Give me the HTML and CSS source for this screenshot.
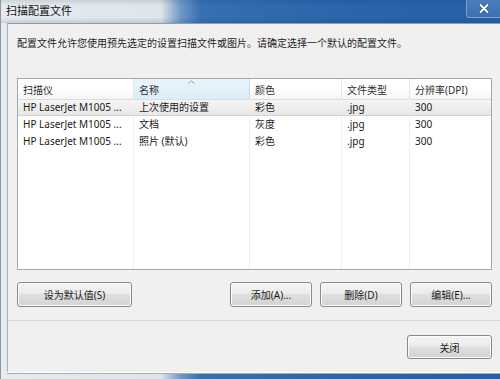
FILE: index.html
```html
<!DOCTYPE html>
<html>
<head>
    <title>扫描配置文件</title>
    <link rel="stylesheet" href="styles.css">
</head>
<body>
    <div class="window">
        <div class="titlebar">
            <span class="title">扫描配置文件</span>
            <div class="close">
                <svg width="10" height="9" viewBox="0 0 10 9">
                    <path d="M1.5 1 L8.5 8 M8.5 1 L1.5 8" stroke="#2b4e7d" stroke-width="3.2" stroke-linecap="round"/>
                    <path d="M1.5 1 L8.5 8 M8.5 1 L1.5 8" stroke="#fff" stroke-width="1.9" stroke-linecap="round"/>
                </svg>
            </div>
        </div>
        <div class="client">
            <div class="main">
                <p class="intro">配置文件允许您使用预先选定的设置扫描文件或图片。请确定选择一个默认的配置文件。</p>
                <div class="list">
                    <table>
                        <colgroup>
                            <col class="c1"><col class="c2"><col class="c3"><col class="c4"><col class="c5">
                        </colgroup>
                        <thead>
                            <tr>
                                <th>扫描仪</th>
                                <th class="sorted">名称
                                    <svg class="sort-arrow" width="7" height="4" viewBox="0 0 7 4">
                                        <path d="M0.5 3.5 L3.5 0.7 L6.5 3.5" fill="none" stroke="#8e9cab" stroke-width="1"/>
                                    </svg>
                                </th>
                                <th>颜色</th>
                                <th>文件类型</th>
                                <th>分辨率(DPI)</th>
                            </tr>
                        </thead>
                        <tbody>
                            <tr class="hot">
                                <td>HP LaserJet M1005 ...</td><td>上次使用的设置</td><td>彩色</td><td>.jpg</td><td>300</td>
                            </tr>
                            <tr>
                                <td>HP LaserJet M1005 ...</td><td>文档</td><td>灰度</td><td>.jpg</td><td>300</td>
                            </tr>
                            <tr>
                                <td>HP LaserJet M1005 ...</td><td>照片 (默认)</td><td>彩色</td><td>.jpg</td><td>300</td>
                            </tr>
                            <tr class="filler">
                                <td></td><td></td><td></td><td></td><td></td>
                            </tr>
                        </tbody>
                    </table>
                </div>
                <div class="actions">
                    <button class="btn btn-default">设为默认值(S)</button>
                    <button class="btn">添加(A)...</button>
                    <button class="btn">删除(D)</button>
                    <button class="btn">编辑(E)...</button>
                </div>
            </div>
            <div class="footer">
                <button class="btn btn-close">关闭</button>
            </div>
        </div>
    </div>
</body>
</html>
```

FILE: styles.css
```css
body {
    margin: 0;
    background: #fff;
    font-family: "Noto Sans", "Noto Sans CJK SC", sans-serif;
    font-size: 10px;
    color: #1a1a1a;
}

.window {
    width: 500px;
    height: 379px;
    box-sizing: border-box;
    border-left: 1px solid #8d97a3;
    background: linear-gradient(to right, #e7ebef 0, #dfe5eb 32%, #6f98c6 36%, #3670b2 40%, #2a64aa 70%, #2560a8 100%);
    display: flex;
    flex-direction: column;
    overflow: hidden;
}

.titlebar {
    height: 23px;
    flex-shrink: 0;
    display: flex;
    justify-content: space-between;
    align-items: flex-start;
    background: linear-gradient(rgba(20, 40, 70, 0.12), rgba(255, 255, 255, 0) 25%, rgba(255, 255, 255, 0) 75%, rgba(20, 40, 70, 0.15));
}

.title {
    padding: 4px 0 0 5px;
    font-size: 11px;
    line-height: 14px;
    color: #111;
}

.close {
    width: 34px;
    height: 18px;
    box-sizing: border-box;
    border: 1px solid #7f9fc9;
    border-top: none;
    border-right: none;
    border-radius: 0 0 0 4px;
    background: linear-gradient(#4a7dbc, #3b6fb0);
    display: flex;
    align-items: center;
    justify-content: center;
}

.client {
    flex: 1;
    margin: 0 0 7px 6px;
    background: #f0f0f0;
    border-top: 1px solid #8a9db3;
    border-left: 1px solid #a9b3be;
    box-shadow: 0 1px 0 #fdfdfd, 0 2px 0 #a5adb6;
    display: flex;
    flex-direction: column;
}

.main {
    padding: 12px 8px 13px 9px;
}

.intro {
    margin: 0;
    line-height: 14px;
    color: #1e1e1e;
}

.list {
    margin-top: 28px;
    height: 192px;
    box-sizing: border-box;
    border: 1px solid #a3a8ae;
    background: #fff;
    overflow: hidden;
}

table {
    width: 100%;
    table-layout: fixed;
    border-collapse: separate;
    border-spacing: 0;
}

.c1 { width: 116px; }
.c2 { width: 116px; }
.c3 { width: 92px; }
.c4 { width: 68px; }
.c5 { width: 81px; }

th {
    position: relative;
    height: 20px;
    padding: 0 0 0 5px;
    text-align: left;
    font-weight: normal;
    color: #2e2e2e;
    border-right: 1px solid #e2e6eb;
    background: linear-gradient(#ffffff, #ffffff 50%, #f4f5f7);
    white-space: nowrap;
}

th.sorted {
    background: linear-gradient(#e8f4fc, #dbeef9);
    border-right-color: #c8dbea;
}

.sort-arrow {
    position: absolute;
    top: 1px;
    left: 54px;
}

td {
    height: 17px;
    padding: 0 0 0 5px;
    line-height: 17px;
    border-right: 1px solid #f0f0f0;
    white-space: nowrap;
    overflow: hidden;
    color: #1a1a1a;
}

th:last-child,
td:last-child {
    border-right: none;
}

tr.hot {
    background: linear-gradient(#f6f6f6, #e6e6e6);
}

tr.hot td {
    border-right-color: transparent;
    border-top: 1px solid #dcdcdc;
    border-bottom: 1px solid #d2d2d2;
    height: 15px;
    line-height: 15px;
}

tr.filler td {
    height: 119px;
}

.actions {
    display: flex;
    gap: 8px;
    margin-top: 12px;
}

.btn {
    height: 25px;
    width: 82px;
    box-sizing: border-box;
    padding: 0;
    border: 1px solid #8a8a8a;
    border-radius: 3px;
    background: linear-gradient(#f4f4f4 0, #ececec 45%, #dfdfdf 50%, #d3d3d3 100%);
    box-shadow: inset 0 0 0 1px #fbfbfb;
    font: inherit;
    color: #1a1a1a;
}

.btn-default {
    width: 115px;
    margin-right: auto;
}

.footer {
    flex: 1;
    border-top: 1px solid #d6d6d6;
    padding: 14px 8px 0 0;
    display: flex;
    justify-content: flex-end;
    align-items: flex-start;
}

.btn-close {
    width: 85px;
    height: 24px;
}
```
